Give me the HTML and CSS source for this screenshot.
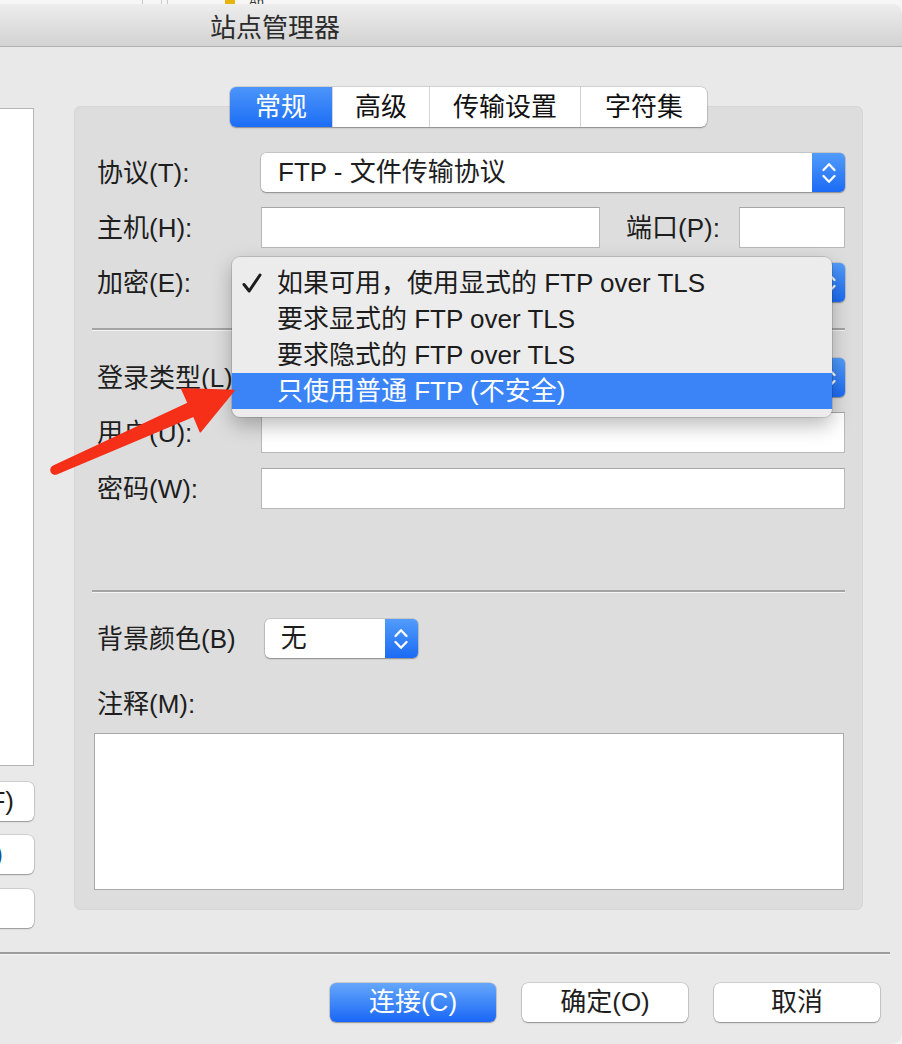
FILE: index.html
```html
<!DOCTYPE html>
<html lang="zh-CN">
<head>
<meta charset="utf-8">
<title>站点管理器</title>
<link rel="stylesheet" href="styles.css">
</head>
<body>
<div class="desk">
  <span class="desk-line l1"></span>
  <span class="desk-line l2"></span>
  <span class="desk-line l3"></span>
  <span class="desk-icon"></span>
  <span class="desk-text">Ab</span>
</div>
<div class="window">
  <div class="titlebar"><span class="title">站点管理器</span></div>
  <div class="content">
    <div class="left-col">
      <div class="sitelist"></div>
      <div class="side-btn b1"><span>新建文件夹(F)</span></div>
      <div class="side-btn b2"><span>新建书签(O)</span></div>
      <div class="side-btn b3"><span>删除(D)</span></div>
    </div>
    <div class="right-col">
      <div class="tabs">
        <div class="tab active t1">常规</div>
        <div class="tab t2">高级</div>
        <div class="tab t3">传输设置</div>
        <div class="tab t4">字符集</div>
      </div>
      <div class="group">
        <div class="form form-top">
          <label class="lbl">协议(T):</label>
          <div class="select h39">
            <span class="val">FTP - 文件传输协议</span>
            <span class="stepper"><svg width="14" height="24" viewBox="0 0 14 24"><path d="M1.5 9 L7 3.2 L12.5 9 M1.5 15 L7 20.8 L12.5 15" fill="none" stroke="#fff" stroke-width="2.3" stroke-linecap="round" stroke-linejoin="round"/></svg></span>
          </div>
          <label class="lbl">主机(H):</label>
          <div class="host-row">
            <div class="input host"></div>
            <label class="lbl port-label">端口(P):</label>
            <div class="input port"></div>
          </div>
          <label class="lbl">加密(E):</label>
          <div class="select h39">
            <span class="val">只使用普通 FTP (不安全)</span>
            <span class="stepper"><svg width="14" height="24" viewBox="0 0 14 24"><path d="M1.5 9 L7 3.2 L12.5 9 M1.5 15 L7 20.8 L12.5 15" fill="none" stroke="#fff" stroke-width="2.3" stroke-linecap="round" stroke-linejoin="round"/></svg></span>
          </div>
        </div>
        <div class="sep sep1"></div>
        <div class="form form-login">
          <label class="lbl">登录类型(L):</label>
          <div class="select h39">
            <span class="val">正常</span>
            <span class="stepper"><svg width="14" height="24" viewBox="0 0 14 24"><path d="M1.5 9 L7 3.2 L12.5 9 M1.5 15 L7 20.8 L12.5 15" fill="none" stroke="#fff" stroke-width="2.3" stroke-linecap="round" stroke-linejoin="round"/></svg></span>
          </div>
          <label class="lbl">用户(U):</label>
          <div class="input"></div>
          <label class="lbl">密码(W):</label>
          <div class="input"></div>
        </div>
        <div class="sep sep2"></div>
        <div class="bg-row">
          <label class="lbl">背景颜色(B)</label>
          <div class="select h39 small">
            <span class="val">无</span>
            <span class="stepper"><svg width="14" height="24" viewBox="0 0 14 24"><path d="M1.5 9 L7 3.2 L12.5 9 M1.5 15 L7 20.8 L12.5 15" fill="none" stroke="#fff" stroke-width="2.3" stroke-linecap="round" stroke-linejoin="round"/></svg></span>
          </div>
        </div>
        <label class="lbl note-label">注释(M):</label>
        <div class="textarea"></div>
      </div>
    </div>
  </div>
  <div class="footer-sep"></div>
  <div class="footer">
    <div class="btn primary">连接(C)</div>
    <div class="btn">确定(O)</div>
    <div class="btn">取消</div>
  </div>
</div>

<div class="menu">
  <div class="item"><span class="mark"><svg width="22" height="22" viewBox="0 0 22 22"><path d="M3 12.5 L8.2 19 L19 3" fill="none" stroke="#1c1c1c" stroke-width="3" stroke-linecap="round" stroke-linejoin="round"/></svg></span><span>如果可用，使用显式的 FTP over TLS</span></div>
  <div class="item"><span class="mark"></span><span>要求显式的 FTP over TLS</span></div>
  <div class="item"><span class="mark"></span><span>要求隐式的 FTP over TLS</span></div>
  <div class="item sel"><span class="mark"></span><span>只使用普通 FTP (不安全)</span></div>
</div>

<svg class="arrow" width="902" height="1044" viewBox="0 0 902 1044">
  <path d="M53.4 466.3 L188.2 403.3 L181.7 388.7 L234 390.5 L200.3 431.7 L193.8 416.1 L56.6 473.7 A4 4 0 0 1 53.4 466.3 Z" fill="#f52f18" stroke="#f52f18" stroke-width="1.5" stroke-linejoin="round"/>
</svg>
</body>
</html>
```
FILE: styles.css
```css
* {
  box-sizing: border-box;
  margin: 0;
  padding: 0;
}

html, body {
  width: 902px;
  height: 1044px;
  overflow: hidden;
}

body {
  position: relative;
  background: #f4f4f4;
  font-family: "Liberation Sans", "Noto Sans CJK SC", sans-serif;
  font-size: 26px;
  color: #1e1e1e;
}

/* strip of the window behind */
.desk {
  height: 4px;
  display: flex;
  align-items: flex-end;
  overflow: hidden;
  background: #f6f6f6;
}
.desk-line {
  width: 1px;
  height: 4px;
  background: #c9c9c9;
}
.l1 { margin-left: 142px; }
.l2 { margin-left: 18px; }
.l3 { margin-left: 5px; }
.desk-icon {
  width: 10px;
  height: 4px;
  margin-left: 57px;
  background: #e7b40e;
}
.desk-text {
  margin-left: 14px;
  font-size: 12px;
  line-height: 4px;
  height: 4px;
  overflow: hidden;
  color: #333;
}

/* window */
.window {
  height: 1040px;
  background: #e9e9e9;
  border-top-right-radius: 10px;
  border-bottom-right-radius: 10px;
  overflow: hidden;
  display: flex;
  flex-direction: column;
}

.titlebar {
  height: 43px;
  flex: none;
  background: linear-gradient(#ededed, #d3d3d3);
  border-bottom: 1px solid #b2b2b2;
  padding: 2px 0 0 210px;
  display: flex;
  align-items: center;
}
.title {
  font-family: "Noto Sans CJK SC", sans-serif;
  font-size: 26px;
  line-height: 30px;
  color: #2a2a2a;
}

.content {
  height: 905px;
  flex: none;
  display: flex;
  align-items: flex-start;
  gap: 40px;
  padding-top: 40px;
}

/* left column (site list, mostly off-screen) */
.left-col {
  width: 134px;
  flex: none;
  margin-left: -100px;
  margin-top: 21px;
  display: flex;
  flex-direction: column;
}
.sitelist {
  height: 658px;
  background: #fff;
  border: 1px solid #b6b6b6;
}
.side-btn {
  height: 39px;
  display: flex;
  justify-content: flex-end;
  align-items: center;
  background: #fff;
  border-radius: 6px;
  box-shadow: 0 0 0 0.5px rgba(0, 0, 0, 0.22), 0 1px 1.5px rgba(0, 0, 0, 0.28);
  white-space: nowrap;
  overflow: hidden;
}
.side-btn span { flex: none; line-height: 39px; }
.b1 { margin-top: 16px; padding-right: 20px; }
.b2 { margin-top: 14px; padding-right: 31px; color: #1a4f8a; }
.b3 { margin-top: 15px; padding-right: 44px; }

/* right column */
.right-col {
  width: 789px;
  flex: none;
  display: flex;
  flex-direction: column;
}

.tabs {
  align-self: center;
  display: flex;
  height: 40px;
  position: relative;
  z-index: 1;
  background: #fff;
  border-radius: 6px;
  box-shadow: 0 0 0 0.5px rgba(0, 0, 0, 0.2), 0 1px 1.5px rgba(0, 0, 0, 0.3);
}
.tab {
  line-height: 40px;
  text-align: center;
  border-left: 1px solid #d3d3d3;
  color: #111;
}
.tab.t1 { width: 102px; border-left: none; }
.tab.t2 { width: 97px; }
.tab.t3 { width: 151px; }
.tab.t4 { width: 127px; }
.tab.active {
  background: linear-gradient(#4c95fa, #1c6df5);
  color: #fff;
  border-radius: 6px 0 0 6px;
}

.group {
  margin-top: -21px;
  height: 804px;
  background: #dddddd;
  border-radius: 7px;
  box-shadow: inset 0 0 0 1px #d6d6d6;
}

.lbl {
  display: block;
  line-height: 30px;
  white-space: nowrap;
  color: #1e1e1e;
}

.form {
  display: grid;
  grid-template-columns: 164px 1fr;
  row-gap: 15px;
  align-items: center;
  padding: 0 18px 0 23px;
}
.form-top { margin-top: 47px; }
.form-login { margin-top: 27px; }

.select {
  display: flex;
  background: #fff;
  border-radius: 5px;
  box-shadow: 0 0 0 0.5px rgba(0, 0, 0, 0.2), 0 1px 1.5px rgba(0, 0, 0, 0.3);
  overflow: hidden;
}
.h39 { height: 39px; }
.select .val {
  flex: 1;
  padding-left: 17px;
  line-height: 39px;
  white-space: nowrap;
}
.stepper {
  width: 33px;
  flex: none;
  background: linear-gradient(#529cfb, #1b6bf5);
  display: flex;
  align-items: center;
  justify-content: center;
}

.input {
  height: 41px;
  background: #fff;
  border: 1px solid #b8b8b8;
  border-top-color: #a6a6a6;
}

.host-row {
  display: flex;
  align-items: center;
}
.input.host { width: 339px; }
.port-label { margin-left: 26px; }
.input.port { width: 106px; margin-left: auto; }

.sep {
  height: 3px;
  margin: 0 18px;
  border-top: 2px solid #a4a4a4;
  border-bottom: 1px solid #f4f4f4;
}
.sep1 { margin-top: 26px; }
.sep2 { margin-top: 81px; }

.bg-row {
  display: flex;
  align-items: center;
  margin-top: 26px;
  padding-left: 23px;
}
.select.small {
  width: 153px;
  margin-left: 29px;
}
.select.small .val { padding-left: 16px; }

.note-label {
  margin-top: 31px;
  padding-left: 23px;
}
.textarea {
  margin: 14px 19px 0 20px;
  height: 157px;
  background: #fff;
  border: 1px solid #a9a9a9;
}

/* footer */
.footer-sep {
  height: 3px;
  flex: none;
  margin-right: 12px;
  border-top: 2px solid #9c9c9c;
  border-bottom: 1px solid #f3f3f3;
}
.footer {
  display: flex;
  justify-content: flex-end;
  gap: 26px;
  padding: 28px 22px 0 0;
}
.btn {
  width: 166px;
  height: 39px;
  border-radius: 6px;
  background: #fff;
  line-height: 39px;
  text-align: center;
  color: #1e1e1e;
  box-shadow: 0 0 0 0.5px rgba(0, 0, 0, 0.22), 0 1px 1.5px rgba(0, 0, 0, 0.3);
}
.btn.primary {
  background: linear-gradient(#66a7fb, #1967f6);
  color: #fff;
}

/* popup menu */
.menu {
  position: absolute;
  left: 232px;
  top: 257px;
  width: 600px;
  padding: 8px 0;
  background: #ececec;
  border-radius: 8px;
  box-shadow: 0 0 0 1px rgba(0, 0, 0, 0.12), 0 8px 20px rgba(0, 0, 0, 0.28);
}
.item {
  display: flex;
  align-items: center;
  height: 36px;
  line-height: 36px;
  white-space: nowrap;
  color: #1c1c1c;
}
.mark {
  width: 45px;
  height: 36px;
  flex: none;
  padding-left: 9px;
  display: flex;
  align-items: center;
}
.item.sel {
  background: #3a84f7;
  color: #fff;
}

/* annotation arrow */
.arrow {
  position: absolute;
  left: 0;
  top: 0;
  pointer-events: none;
}
```
